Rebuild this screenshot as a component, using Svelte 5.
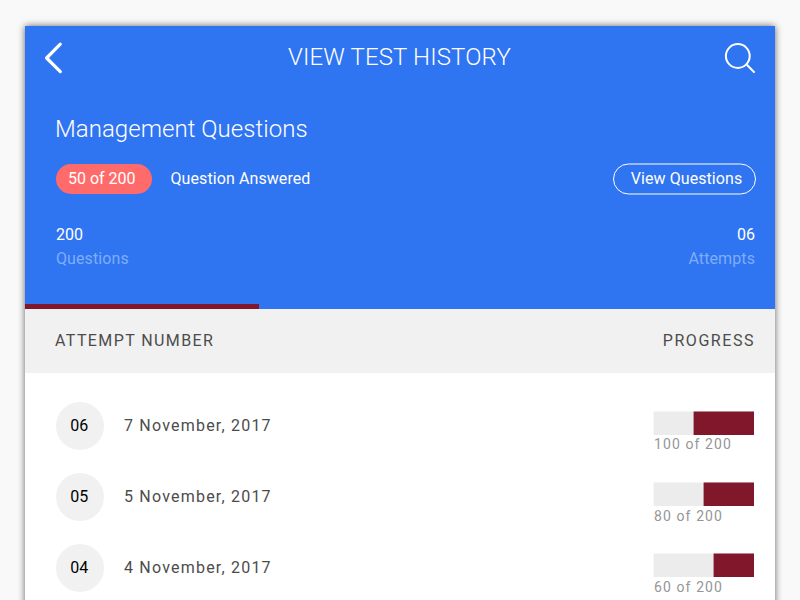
<script>
  const attempts = [
    { number: '06', date: '7 November, 2017', score: 100, fill: 60, gap: 0 },
    { number: '05', date: '5 November, 2017', score: 80, fill: 50, gap: 1 },
    { number: '04', date: '4 November, 2017', score: 60, fill: 40, gap: 1 }
  ];
</script>

<main>
  <section class="card">
    <header>
      <div class="bar">
        <svg class="back" width="20" height="34" viewBox="0 0 20 34" fill="none" stroke="#fff" stroke-width="3.2" stroke-linecap="round" stroke-linejoin="round">
          <path d="M17.3 4.2 L3.6 18 L17.3 31.6" />
        </svg>
        <h1>VIEW TEST HISTORY</h1>
        <svg class="search" width="34" height="34" viewBox="0 0 34 34" fill="none" stroke="#fff" stroke-width="2" stroke-linecap="round">
          <circle cx="15.8" cy="16" r="11.9" />
          <path d="M24.6 24.5 L32 32" />
        </svg>
      </div>
      <h2>Management Questions</h2>
      <div class="summary">
        <span class="pill">50 of 200</span>
        <span class="answered">Question Answered</span>
        <button>
          <svg width="144" height="32" viewBox="0 0 144 32" fill="none" stroke="#fff">
            <rect x="0.5" y="1" width="142" height="30" rx="15" />
          </svg>
          <span>View Questions</span>
        </button>
      </div>
      <div class="stats">
        <div><b>200</b><span class="q">Questions</span></div>
        <div class="right"><b>06</b><span class="a">Attempts</span></div>
      </div>
      <div class="progress"></div>
    </header>
    <div class="columns"><span>ATTEMPT NUMBER</span><span class="p">PROGRESS</span></div>
    <ul>
      {#each attempts as a}
        <li>
          <span class="num">{a.number}</span>
          <span class="date">{a.date}</span>
          <div class="score">
            <svg class="meter" width="101" height="24" viewBox="0 0 101 24">
              <rect x="0.6" y="0.5" width="100.4" height="23.5" fill="#ececec" />
              <rect x={100.6 - a.fill} y="0.5" width={a.fill + 0.4} height="23.5" fill="#80172a" />
            </svg>
            <span style="margin-top: {a.gap}px">{a.score} of 200</span>
          </div>
        </li>
      {/each}
    </ul>
  </section>
</main>

<style>
  :global(body) { background: #f9f9f9; overflow: hidden; }
  main {
    box-sizing: border-box;
    width: 800px;
    height: 600px;
    padding: 26px 25px 0;
    overflow: hidden;
    background: #f9f9f9;
    font-family: Roboto, "Liberation Sans", sans-serif;
    font-size: 16px;
  }
  .card { height: 620px; background: #fff; box-shadow: 0 0 7px rgba(0, 0, 0, 0.6); }
  header {
    display: flex;
    flex-direction: column;
    height: 283px;
    background: #2f74f1;
    color: #fff;
  }
  .bar { display: flex; justify-content: space-between; padding: 14px 19px 0 18px; height: 50px; }
  h1, h2 { margin: 0; font-weight: 300; font-size: 24px; line-height: 30px; white-space: nowrap; }
  h1 { padding-top: 2px; margin-left: 14px; letter-spacing: 0.13px; }
  h2 { margin: 24px 0 0 30px; letter-spacing: 0.04px; }
  .summary { display: flex; align-items: center; height: 32px; margin: 19px 19px 0 31px; }
  .pill {
    box-sizing: border-box;
    width: 96px;
    height: 30px;
    padding-left: 12px;
    border-radius: 15px;
    background: #ff6b6b;
    line-height: 29px;
  }
  .answered { margin-left: 18.5px; padding-bottom: 1px; line-height: 29px; letter-spacing: 0.09px; }
  button {
    position: relative;
    box-sizing: border-box;
    margin-left: auto;
    width: 143px;
    height: 32px;
    padding: 0 0 0 4px;
    border: 0;
    background: none;
    color: #fff;
    font: inherit;
    line-height: 30px;
    letter-spacing: 0.07px;
    white-space: nowrap;
  }
  button svg { position: absolute; left: 0; top: 0; }
  .stats { display: flex; justify-content: space-between; margin: 28px 20px 0 31px; }
  .stats div { display: flex; flex-direction: column; }
  .stats b { font-weight: 400; line-height: 24px; }
  .stats span { color: #7fadf9; line-height: 24px; letter-spacing: 0.1px; }
  .right { text-align: right; }
  .progress { width: 234px; height: 5px; margin-top: auto; background: #80172a; }
  .columns {
    display: flex;
    justify-content: space-between;
    height: 64px;
    padding: 0 20px 0 30px;
    background: #f1f1f1;
    color: #4c4c4c;
    line-height: 63px;
    letter-spacing: 1.4px;
  }
  .p { letter-spacing: 1.55px; }
  ul { margin: 0; padding: 29px 21px 0 31px; list-style: none; }
  li { display: flex; align-items: flex-start; height: 71px; }
  .num {
    width: 48px;
    height: 48px;
    border-radius: 50%;
    background: #f1f1f1;
    color: #000;
    line-height: 47px;
    text-align: center;
    text-indent: -1.5px;
  }
  .date { margin-left: 20px; color: #4c4c4c; line-height: 47px; letter-spacing: 1.2px; }
  .score { width: 101px; margin: 9px 0 0 auto; }
  .meter { display: block; }
  .score span { display: block; padding-left: 1px; color: #969696; font-size: 14px; line-height: 18px; letter-spacing: 1.1px; }
</style>
